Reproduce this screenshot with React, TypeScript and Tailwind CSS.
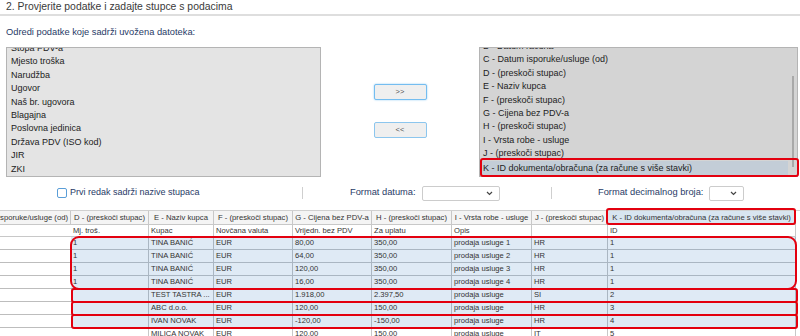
import React from 'react';

const leftItems = [
  'Stopa PDV-a',
  'Mjesto troška',
  'Narudžba',
  'Ugovor',
  'Naš br. ugovora',
  'Blagajna',
  'Poslovna jedinica',
  'Država PDV (ISO kod)',
  'JIR',
  'ZKI',
];

const rightItems = [
  'B - Datum računa',
  'C - Datum isporuke/usluge (od)',
  'D - (preskoči stupac)',
  'E - Naziv kupca',
  'F - (preskoči stupac)',
  'G - Cijena bez PDV-a',
  'H - (preskoči stupac)',
  'I - Vrsta robe - usluge',
  'J - (preskoči stupac)',
];

// column widths, first one is the horizontally scrolled "C" column
const colW = ['w-[71px]', 'w-[78px]', 'w-[65px]', 'w-[79px]', 'w-[79px]', 'w-[80px]', 'w-[80px]', 'w-[76px]', 'w-[188px]'];

const headers = [
  'C - Datum isporuke/usluge (od)',
  'D - (preskoči stupac)',
  'E - Naziv kupca',
  'F - (preskoči stupac)',
  'G - Cijena bez PDV-a',
  'H - (preskoči stupac)',
  'I - Vrsta robe - usluge',
  'J - (preskoči stupac)',
  'K - ID dokumenta/obračuna (za račune s više stavki)',
];

const subHeader = ['', 'Mj. troš.', 'Kupac', 'Novčana valuta', 'Vrijedn. bez PDV', 'Za uplatu', 'Opis', '', 'ID'];

const groupRows = [
  ['', '1', 'TINA BANIĆ', 'EUR', '80,00', '350,00', 'prodaja usluge 1', 'HR', '1'],
  ['', '1', 'TINA BANIĆ', 'EUR', '64,00', '350,00', 'prodaja usluge 2', 'HR', '1'],
  ['', '1', 'TINA BANIĆ', 'EUR', '120,00', '350,00', 'prodaja usluge 3', 'HR', '1'],
  ['', '1', 'TINA BANIĆ', 'EUR', '16,00', '350,00', 'prodaja usluge 4', 'HR', '1'],
];

const singleRows = [
  ['', '', 'TEST TASTRA ...', 'EUR', '1.918,00', '2.397,50', 'prodaja usluge', 'SI', '2'],
  ['', '', 'ABC d.o.o.', 'EUR', '120,00', '150,00', 'prodaja usluge', 'HR', '3'],
  ['', '', 'IVAN NOVAK', 'EUR', '-120,00', '-150,00', 'prodaja usluge', 'HR', '4'],
];

const lastRow = ['', '', 'MILICA NOVAK', 'EUR', '120,00', '150,00', 'prodaja usluge', 'IT', '5'];

const DataRow: React.FC<{ cells: string[]; blue?: boolean }> = ({ cells, blue }) => (
  <div className="flex h-[13px]">
    {cells.map((c, i) => (
      <div
        key={i}
        className={`${colW[i]} shrink-0 overflow-hidden whitespace-nowrap border-b px-[2px] leading-[12px] ${
          i === 0
            ? 'border-[#bdbdbd] bg-white'
            : blue
              ? 'border-r border-[#aab6c2] bg-[#dfeaf5]'
              : 'border-r border-[#c8c8c8] bg-white'
        }`}
      >
        {c}
      </div>
    ))}
  </div>
);

const Chevron = () => (
  <svg width="7" height="5" viewBox="0 0 7 5" className="text-[#444]">
    <path d="M1 1l2.5 2.5L6 1" fill="none" stroke="currentColor" strokeWidth="1.2" />
  </svg>
);

export default function App() {
  return (
    <div className="w-[800px] h-[336px] overflow-hidden bg-white font-['Liberation_Sans',Arial,sans-serif]">
      {/* Section title */}
      <div className="h-[16px] border-b-2 border-[#dedede] pl-[6px] text-[10.4px] leading-[14px] text-[#3a3a3a]">
        2. Provjerite podatke i zadajte stupce s podacima
      </div>

      <div className="mt-[9px] h-[14px] pl-[6px] text-[9.3px] leading-[14px] text-[#283a66]">
        Odredi podatke koje sadrži uvožena datoteka:
      </div>

      {/* Two list boxes with move buttons */}
      <div className="mt-[8px] flex h-[130px]">
        <div className="ml-[6px] w-[315px] shrink-0 overflow-hidden border border-[#b4b4b4] bg-[#e4e4e4]">
          <div className="mt-[-6px]">
            {leftItems.map(t => (
              <div key={t} className="h-[13.4px] whitespace-nowrap pl-[4px] text-[9px] leading-[13.4px] text-[#222]">
                {t}
              </div>
            ))}
          </div>
        </div>

        <div className="flex w-[158px] shrink-0 flex-col items-center pt-[37px]">
          <button className="h-[16px] w-[53px] rounded-[2px] border border-[#74bdf0] bg-[#efefef] text-[7.5px] leading-[14px] text-[#555] shadow-[0_0_2px_#8fcaf3]">
            &gt;&gt;
          </button>
          <button className="mt-[22px] h-[16px] w-[53px] rounded-[2px] border border-[#8cc6ee] bg-[#efefef] text-[7.5px] leading-[14px] text-[#555]">
            &lt;&lt;
          </button>
        </div>

        <div className="relative flex w-[319px] shrink-0 border border-[#b4b4b4] bg-[#d4d4d4]">
          <div className="flex-1 overflow-hidden">
            <div className="mt-[-8px]">
              {rightItems.map(t => (
                <div key={t} className="h-[13.4px] whitespace-nowrap pl-[3px] text-[9px] leading-[13.4px] text-[#222]">
                  {t}
                </div>
              ))}
              <div className="h-[14px] whitespace-nowrap bg-[#c3cdd7] pl-[3px] text-[9px] leading-[14px] text-[#222]">
                K - ID dokumenta/obračuna (za račune s više stavki)
              </div>
            </div>
          </div>
          <div className="flex w-[9px] shrink-0 justify-center pt-[28px]">
            <div className="h-[91px] w-[2px] bg-[#a9a9a9]" />
          </div>
          <div className="absolute left-0 -right-[2px] top-[110px] h-[19px] rounded-[3px] border-2 border-[#e3000f]" />
        </div>
      </div>

      {/* Options */}
      <div className="mt-[8px] flex h-[16px] items-center text-[9.3px] text-[#283a66]">
        <div className="flex w-[302px] shrink-0 items-center justify-start pl-[57px]">
          <div className="h-[10px] w-[10px] shrink-0 rounded-[2px] border border-[#5a9ed8] bg-white" />
          <span className="ml-[3px] whitespace-nowrap text-[9px]">Prvi redak sadrži nazive stupaca</span>
        </div>
        <div className="h-[12px] w-[1px] shrink-0 bg-[#cfcfcf]" />
        <div className="flex w-[248px] shrink-0 items-center pl-[47px]">
          <span className="whitespace-nowrap">Format datuma:</span>
          <div className="ml-[6px] flex h-[15px] w-[78px] items-center justify-end rounded-[2px] border border-[#cccccc] bg-white pr-[6px]">
            <Chevron />
          </div>
        </div>
        <div className="h-[12px] w-[1px] shrink-0 bg-[#cfcfcf]" />
        <div className="flex flex-1 items-center pl-[46px]">
          <span className="whitespace-nowrap">Format decimalnog broja:</span>
          <div className="ml-[6px] flex h-[15px] w-[35px] items-center justify-end rounded-[2px] border border-[#cccccc] bg-white pr-[6px]">
            <Chevron />
          </div>
        </div>
      </div>

      {/* Preview table */}
      <div className="mt-[9px] text-[7.6px] text-[#333]">
        <div className="flex h-[15px] border-t border-[#d0d0d0] text-[7.7px]">
          {headers.map((h, i) => (
            <div
              key={h}
              className={`${colW[i]} relative flex shrink-0 items-center whitespace-nowrap border-r border-b border-[#c8c8c8] ${
                i === 0 ? 'justify-end overflow-hidden bg-[#f4f4f4] pr-[2px]' : i === 8 ? 'justify-center bg-[#d8e5f0]' : 'justify-center bg-[#f4f4f4]'
              }`}
            >
              {h}
              {i === 8 && (
                <div className="absolute -left-[2px] -right-[1px] -top-[3px] -bottom-[1px] rounded-[3px] border-2 border-[#e3000f]" />
              )}
            </div>
          ))}
        </div>
        <div className="flex h-[12px]">
          {subHeader.map((c, i) => (
            <div
              key={i}
              className={`${colW[i]} shrink-0 overflow-hidden whitespace-nowrap border-b border-[#c8c8c8] px-[2px] leading-[11px] ${
                i === 0 ? '' : 'border-r'
              }`}
            >
              {c}
            </div>
          ))}
        </div>

        <div className="relative">
          {groupRows.map((r, i) => (
            <DataRow key={i} cells={r} blue />
          ))}
          <div className="absolute left-[70px] right-[3px] -top-[1px] -bottom-[1px] rounded-[9px] border-2 border-[#e3000f]" />
        </div>
        {singleRows.map((r, i) => (
          <div key={i} className="relative">
            <DataRow cells={r} blue />
            <div className="absolute left-[71px] right-[2px] -top-[1px] -bottom-[1px] rounded-[3px] border-2 border-[#e3000f]" />
          </div>
        ))}
        <DataRow cells={lastRow} />
      </div>
    </div>
  );
}
